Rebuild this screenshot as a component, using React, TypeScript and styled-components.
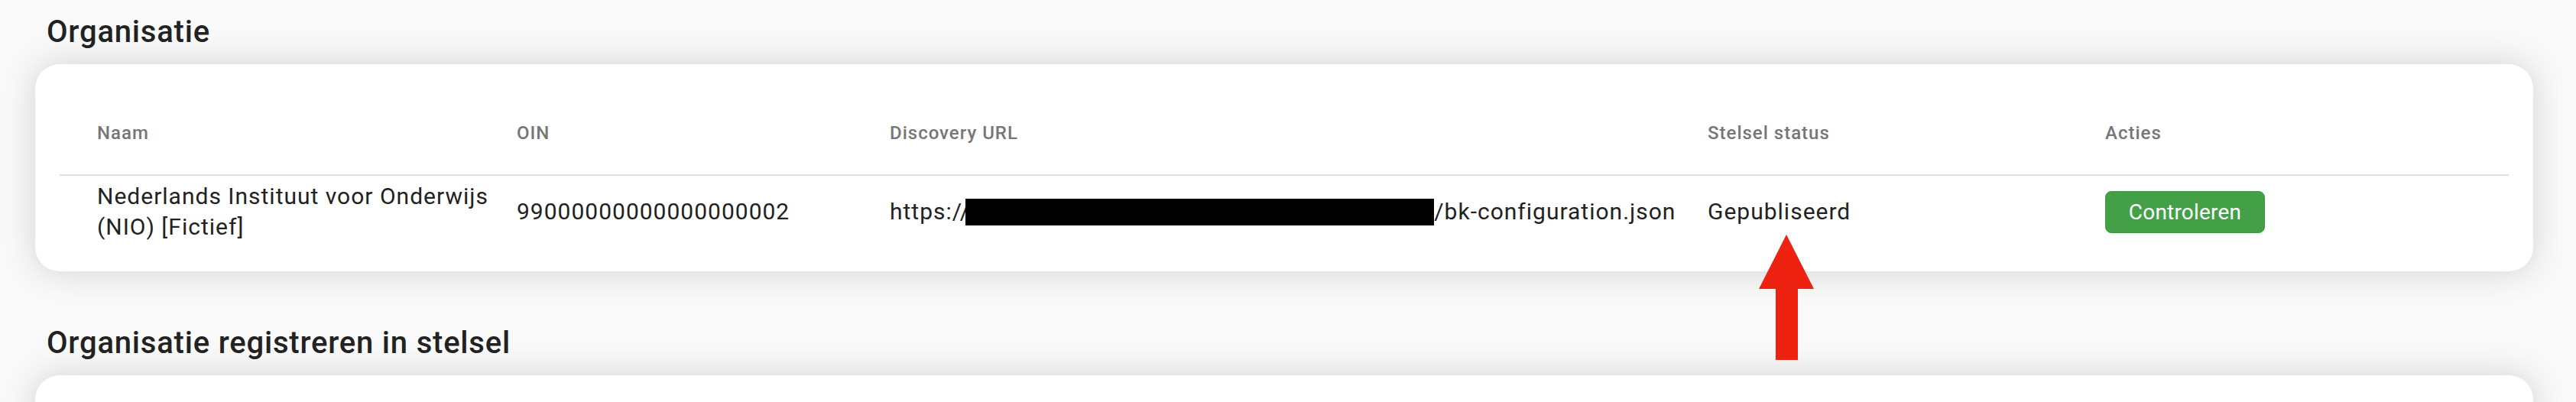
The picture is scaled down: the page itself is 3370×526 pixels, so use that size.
import React from "react";
import styled, { createGlobalStyle } from "styled-components";

const GlobalStyle = createGlobalStyle`
  html, body {
    margin: 0;
    padding: 0;
    background: #f9f9f9;
    font-family: Roboto, "Noto Sans", Arial, sans-serif;
  }
  * { box-sizing: border-box; }
`;

const Page = styled.div`
  position: relative;
  display: flex;
  width: 3370px;
  height: 526px;
  overflow: hidden;
  background: #f9f9f9;
`;

const Main = styled.main`
  flex: 0 0 3346px;
  overflow: hidden;
  padding: 18px 32px 0 46px;
`;

const ScrollGutter = styled.div`
  flex: 1 1 auto;
  background: #f9f9f9;
`;

const SectionTitle = styled.h2<{ $top?: number }>`
  margin: ${(p) => p.$top ?? 0}px 0 18px 15px;
  font-size: 40px;
  line-height: 48px;
  font-weight: 500;
  letter-spacing: 0.8px;
  color: #222222;
`;

const Card = styled.section<{ $minHeight?: number }>`
  background: #ffffff;
  border-radius: 32px;
  box-shadow: 0 0 44px rgba(0, 0, 0, 0.16);
  padding: 40px 32px 31px;
  min-height: ${(p) => p.$minHeight ?? 0}px;
`;

const Row = styled.div<{ $head?: boolean }>`
  display: grid;
  grid-template-columns: 549px 488px 1070px 520px 1fr;
  align-items: center;
  padding: ${(p) => (p.$head ? "33px 0 37px 49px" : "7px 0 7px 49px")};
  border-bottom: ${(p) => (p.$head ? "2px solid #e0e0e0" : "none")};
`;

const HeadCell = styled.div`
  font-size: 24px;
  line-height: 34px;
  font-weight: 500;
  letter-spacing: 1px;
  color: #767676;
`;

const Cell = styled.div`
  padding-right: 16px;
  font-size: 30px;
  line-height: 40px;
  font-weight: 400;
  letter-spacing: 1px;
  color: #222222;
`;

const UrlLine = styled.div`
  display: flex;
  align-items: center;
  white-space: nowrap;
`;

const Redacted = styled.span`
  display: inline-block;
  flex: 0 0 613px;
  height: 35px;
  background: #000000;
  margin-left: -6px;
`;

const ActionButton = styled.button`
  display: inline-flex;
  align-items: center;
  justify-content: center;
  width: 209px;
  height: 55px;
  padding: 0 32px;
  border: 1px solid #3f9944;
  border-radius: 8px;
  background: #43a047;
  color: #ffffff;
  font-family: Roboto, "Noto Sans", Arial, sans-serif;
  font-size: 28px;
  font-weight: 400;
  letter-spacing: 0.2px;
  cursor: pointer;
`;

const ArrowMark = styled.svg`
  position: absolute;
  left: 2301px;
  top: 307px;
  width: 72px;
  height: 164px;
`;

const columns = ["Naam", "OIN", "Discovery URL", "Stelsel status", "Acties"];

export default function App() {
  return (
    <>
      <GlobalStyle />
      <Page>
        <Main>
          <SectionTitle>Organisatie</SectionTitle>
          <Card>
            <Row $head>
              {columns.map((c) => (
                <HeadCell key={c}>{c}</HeadCell>
              ))}
            </Row>
            <Row>
              <Cell>Nederlands Instituut voor Onderwijs (NIO) [Fictief]</Cell>
              <Cell>99000000000000000002</Cell>
              <Cell>
                <UrlLine>
                  https://
                  <Redacted />
                  /bk-configuration.json
                </UrlLine>
              </Cell>
              <Cell>Gepubliseerd</Cell>
              <div>
                <ActionButton>Controleren</ActionButton>
              </div>
            </Row>
          </Card>
          <SectionTitle $top={70}>Organisatie registreren in stelsel</SectionTitle>
          <Card $minHeight={240} />
        </Main>
        <ScrollGutter />
        <ArrowMark viewBox="0 0 72 164" aria-hidden="true">
          <polygon
            points="36,0 72,71 51,71 51,164 22,164 22,71 0,71"
            fill="#ee2210"
          />
        </ArrowMark>
      </Page>
    </>
  );
}
